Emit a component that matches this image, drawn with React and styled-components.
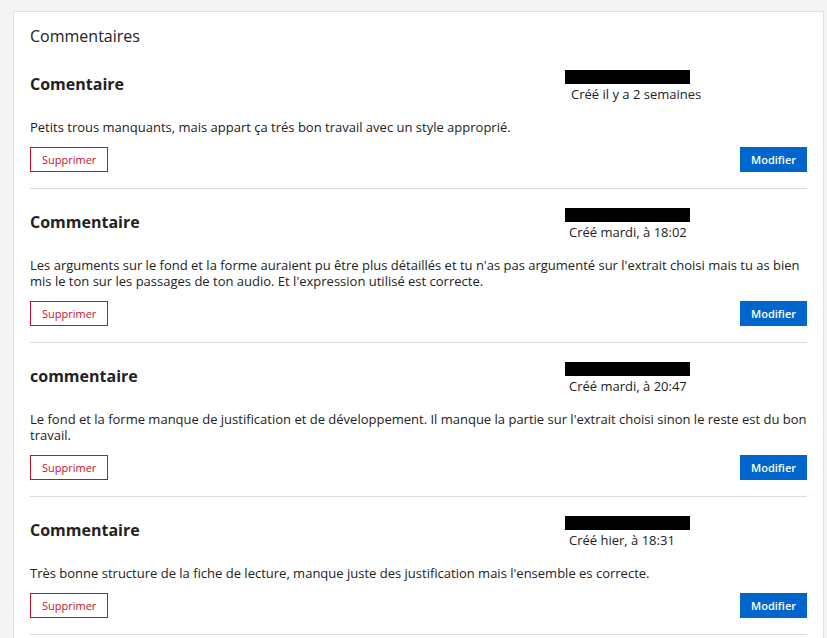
import React from "react";
import styled, { createGlobalStyle } from "styled-components";

const Global = createGlobalStyle`
  html, body { margin: 0; padding: 0; background: #f3f4f6; }
  body { font-family: "Open Sans", "Liberation Sans", sans-serif; color: #222; }
  * { box-sizing: border-box; }
`;

const Page = styled.div`
  padding: 11px 3px 20px 13px;
`;

const Card = styled.section`
  background: #fff;
  border: 1px solid #dde1e6;
  padding: 14px 16px 10px;
`;

const Heading = styled.h2`
  margin: 0;
  font-size: 16px;
  font-weight: 400;
  line-height: 20px;
  color: #222;
`;

const List = styled.div`
  display: flex;
  flex-direction: column;
  margin-top: 24px;
`;

const Item = styled.article`
  padding: ${(p) => (p.$first ? "0" : "19px")} 0 16px;
  border-bottom: 1px solid #dcdcdc;
`;

const Header = styled.div`
  display: grid;
  grid-template-columns: 1fr 242px;
  align-items: start;
`;

const Title = styled.h3`
  margin: 2px 0 0;
  font-size: 16px;
  font-weight: 700;
  line-height: 24px;
  color: #222;
`;

const Meta = styled.div`
  display: flex;
  flex-direction: column;
  align-items: flex-start;
`;

const Redacted = styled.div`
  width: 125px;
  height: 14px;
  background: #000;
`;

const DateText = styled.div`
  font-size: 13px;
  line-height: 17px;
  padding-left: ${(p) => p.$indent}px;
  margin-top: 2px;
  color: #222;
`;

const Body = styled.p`
  margin: 16px 0 0;
  font-size: 13px;
  line-height: 16px;
  color: #222;
`;

const Actions = styled.div`
  display: flex;
  justify-content: space-between;
  align-items: center;
  margin-top: 12px;
`;

const Button = styled.button`
  height: 25px;
  padding: 0 ${(p) => (p.$primary ? 10 : 11)}px;
  font-family: "Open Sans", "Liberation Sans", sans-serif;
  font-size: 11px;
  font-weight: ${(p) => (p.$primary ? 600 : 400)};
  border: 1px solid ${(p) => (p.$primary ? "#0066cc" : "#c8102e")};
  background: ${(p) => (p.$primary ? "#0066cc" : "#fff")};
  color: ${(p) => (p.$primary ? "#fff" : "#c8102e")};
  cursor: pointer;
`;

const comments = [
  {
    title: "Comentaire",
    date: "Créé il y a 2 semaines",
    indent: 6,
    text: "Petits trous manquants, mais appart ça trés bon travail avec un style approprié.",
  },
  {
    title: "Commentaire",
    date: "Créé mardi, à 18:02",
    indent: 4,
    text: "Les arguments sur le fond et la forme auraient pu être plus détaillés et tu n'as pas argumenté sur l'extrait choisi mais tu as bien mis le ton sur les passages de ton audio. Et l'expression utilisé est correcte.",
  },
  {
    title: "commentaire",
    date: "Créé mardi, à 20:47",
    indent: 4,
    text: "Le fond et la forme manque de justification et de développement. Il manque la partie sur l'extrait choisi sinon le reste est du bon travail.",
  },
  {
    title: "Commentaire",
    date: "Créé hier, à 18:31",
    indent: 4,
    text: "Très bonne structure de la fiche de lecture, manque juste des justification mais l'ensemble es correcte.",
  },
];

export default function App() {
  return (
    <>
      <Global />
      <Page>
        <Card>
          <Heading>Commentaires</Heading>
          <List>
            {comments.map((c, i) => (
              <Item key={i} $first={i === 0}>
                <Header>
                  <Title>{c.title}</Title>
                  <Meta>
                    <Redacted />
                    <DateText $indent={c.indent}>{c.date}</DateText>
                  </Meta>
                </Header>
                <Body>{c.text}</Body>
                <Actions>
                  <Button>Supprimer</Button>
                  <Button $primary>Modifier</Button>
                </Actions>
              </Item>
            ))}
          </List>
        </Card>
      </Page>
    </>
  );
}
